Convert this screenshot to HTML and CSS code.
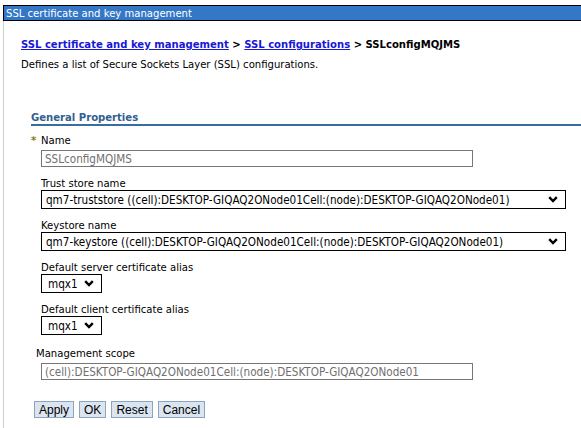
FILE: index.html
```html
<!DOCTYPE html>
<html>
<head>
<meta charset="utf-8">
<link rel="stylesheet" href="styles.css">
</head>
<body>
<div class="titlebar">SSL certificate and key management</div>
<div class="panel">
  <div class="crumbs"><a href="#">SSL certificate and key management</a> &gt; <a href="#">SSL configurations</a> &gt; SSLconfigMQJMS</div>
  <p class="desc">Defines a list of Secure Sockets Layer (SSL) configurations.</p>
  <div class="props">
    <h3 class="section">General Properties</h3>
    <div class="fields">
      <div class="field">
        <label class="lbl req"><span class="star">*</span>Name</label>
        <input class="txt name" type="text" value="SSLconfigMQJMS" disabled>
      </div>
      <div class="field">
        <label class="lbl">Trust store name</label>
        <div class="selwrap wide">
          <select class="sel"><option>qm7-truststore ((cell):DESKTOP-GIQAQ2ONode01Cell:(node):DESKTOP-GIQAQ2ONode01)</option></select>
          <svg class="chev" width="10" height="7" viewBox="0 0 10 7"><path d="M1.2 1.2 L5 5 L8.8 1.2" fill="none" stroke="#000" stroke-width="2.4"/></svg>
        </div>
      </div>
      <div class="field">
        <label class="lbl">Keystore name</label>
        <div class="selwrap wide">
          <select class="sel"><option>qm7-keystore ((cell):DESKTOP-GIQAQ2ONode01Cell:(node):DESKTOP-GIQAQ2ONode01)</option></select>
          <svg class="chev" width="10" height="7" viewBox="0 0 10 7"><path d="M1.2 1.2 L5 5 L8.8 1.2" fill="none" stroke="#000" stroke-width="2.4"/></svg>
        </div>
      </div>
      <div class="field">
        <label class="lbl">Default server certificate alias</label>
        <div class="selwrap small">
          <select class="sel"><option>mqx1</option></select>
          <svg class="chev" width="10" height="7" viewBox="0 0 10 7"><path d="M1.2 1.2 L5 5 L8.8 1.2" fill="none" stroke="#000" stroke-width="2.4"/></svg>
        </div>
      </div>
      <div class="field">
        <label class="lbl">Default client certificate alias</label>
        <div class="selwrap small">
          <select class="sel"><option>mqx1</option></select>
          <svg class="chev" width="10" height="7" viewBox="0 0 10 7"><path d="M1.2 1.2 L5 5 L8.8 1.2" fill="none" stroke="#000" stroke-width="2.4"/></svg>
        </div>
      </div>
      <div class="field scope">
        <label class="lbl">Management scope</label>
        <input class="txt scopeinput" type="text" value="(cell):DESKTOP-GIQAQ2ONode01Cell:(node):DESKTOP-GIQAQ2ONode01" disabled>
      </div>
    </div>
  </div>
  <div class="buttons">
    <button class="btn">Apply</button>
    <button class="btn">OK</button>
    <button class="btn">Reset</button>
    <button class="btn">Cancel</button>
  </div>
</div>
</body>
</html>
```
FILE: styles.css
```css
html, body {
  margin: 0;
  padding: 0;
  background: #fff;
}
body {
  font-family: "DejaVu Sans Condensed", "DejaVu Sans", sans-serif;
  font-size: 11.2px;
  color: #000;
}
.titlebar {
  margin: 5px 0 0 3px;
  height: 14px;
  line-height: 15px;
  background: #3577c7;
  color: #fff;
  border-top: 1px solid #000;
  border-bottom: 1px solid #000;
  border-left: 1px solid #000;
  padding-left: 2px;
  white-space: nowrap;
}
.panel {
  margin-left: 3px;
  border-left: 1px solid #cfcfcf;
  padding-left: 17px;
  height: calc(100vh - 21px);
  box-sizing: border-box;
  padding-top: 17px;
}
.crumbs {
  font-weight: bold;
  line-height: 14px;
  white-space: nowrap;
}
.crumbs a {
  color: #1818d6;
  text-decoration: underline;
}
.desc {
  margin: 6px 0 0 0;
  line-height: 14px;
}
.props {
  margin: 40px 0 0 10px;
}
.section {
  margin: 0;
  font-size: 11.2px;
  font-weight: bold;
  color: #33608f;
  line-height: 12px;
  border-bottom: 2px solid #3a6d9e;
}
.fields {
  display: flex;
  flex-direction: column;
  gap: 11px;
  margin-top: 9px;
}
.field {
  display: flex;
  flex-direction: column;
  align-items: flex-start;
  padding-left: 10px;
}
.lbl {
  line-height: 12px;
  white-space: nowrap;
}
.req {
  margin-left: -10px;
}
.star {
  display: inline-block;
  width: 10px;
  color: #8d7a10;
  font-weight: bold;
}
.txt {
  margin-top: 3px;
  height: 17px;
  box-sizing: border-box;
  border: 1px solid #767676;
  background: #fff;
  color: #707070;
  font-family: "DejaVu Sans Condensed", "DejaVu Sans", sans-serif;
  font-size: 11.6px;
  padding: 0 3px;
  border-radius: 0;
}
.name {
  width: 432px;
}
.scope {
  margin-top: 2px;
}
.scope .lbl {
  margin-left: -5px;
}
.scopeinput {
  width: 432px;
}
.selwrap {
  position: relative;
  height: 19px;
}
.selwrap.wide {
  width: 525px;
}
.selwrap.small {
  width: 61px;
}
.sel {
  appearance: none;
  -webkit-appearance: none;
  width: 100%;
  height: 19px;
  box-sizing: border-box;
  border: 1px solid #000;
  border-radius: 0;
  background: #fff;
  color: #000;
  font-family: "DejaVu Sans Condensed", "DejaVu Sans", sans-serif;
  font-size: 11.6px;
  padding: 0 20px 0 4px;
  margin: 0;
}
.small .sel {
  padding-left: 6px;
}
.chev {
  position: absolute;
  right: 8px;
  top: 6px;
  pointer-events: none;
}
.buttons {
  display: flex;
  gap: 5px;
  margin: 21px 0 0 13px;
}
.btn {
  height: 17px;
  box-sizing: border-box;
  padding: 0 4px;
  border: 1px solid #8da4bf;
  background: #dae5f1;
  color: #000;
  font-family: "Liberation Sans", Arial, sans-serif;
  font-size: 12px;
  line-height: 14px;
  border-radius: 0;
}
```
